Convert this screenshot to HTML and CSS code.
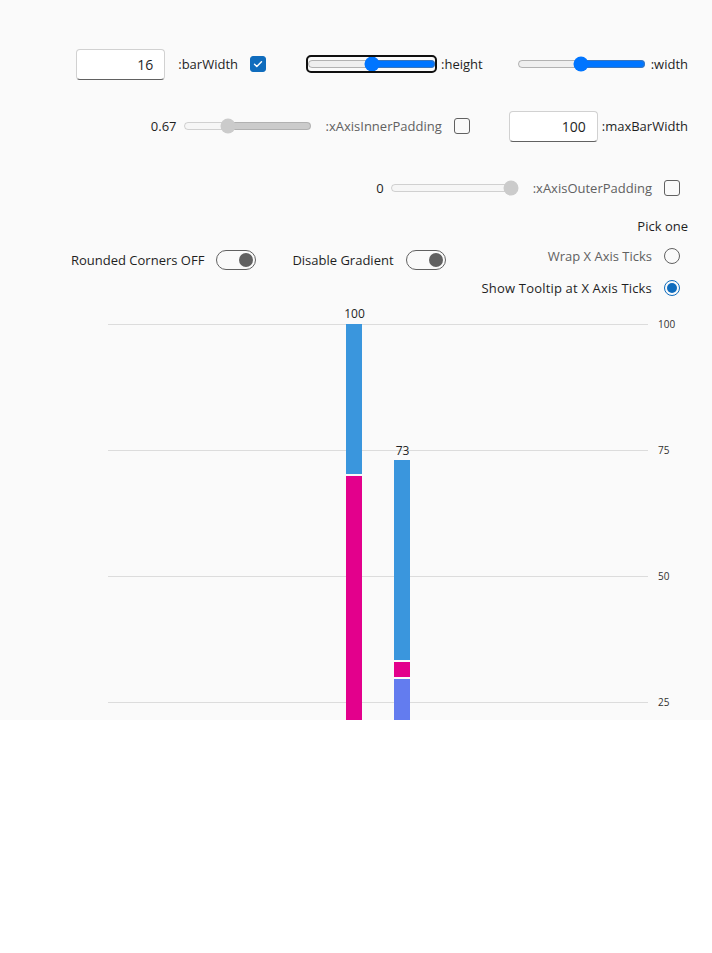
FILE: index.html
```html
<!DOCTYPE html>
<html>
<head>
<meta charset="utf-8">
<link rel="stylesheet" href="styles.css">
</head>
<body>
<div class="page">
  <div class="controls">
    <div class="row">
      <div class="num-input"><span>16</span></div>
      <span class="lbl g13">:barWidth</span>
      <span class="check checked g12"><svg width="16" height="16" viewBox="0 0 16 16"><path d="M4.5 8.2l2.3 2.3 4.7-4.8" fill="none" stroke="#fff" stroke-width="1.4" stroke-linecap="round" stroke-linejoin="round"/></svg></span>
      <input type="range" class="slider focused g41" min="0" max="100" value="50">
      <span class="lbl g5">:height</span>
      <input type="range" class="slider g34" min="0" max="100" value="50">
      <span class="lbl g5">:width</span>
    </div>
    <div class="row">
      <span class="lbl">0.67</span>
      <input type="range" class="slider g6" min="0" max="100" value="67" disabled>
      <span class="lbl dim g14">:xAxisInnerPadding</span>
      <span class="check g12"></span>
      <div class="num-input g39"><span>100</span></div>
      <span class="lbl g4">:maxBarWidth</span>
    </div>
    <div class="row">
      <span class="lbl">0</span>
      <input type="range" class="slider g6" min="0" max="100" value="0" disabled>
      <span class="lbl dim g14">:xAxisOuterPadding</span>
      <span class="check g12 mr8"></span>
    </div>
  </div>
  <div class="options">
    <div class="toggle-group">
      <span class="lbl">Rounded Corners OFF</span>
      <span class="toggle g12"><span class="knob"></span></span>
    </div>
    <div class="toggle-group">
      <span class="lbl">Disable Gradient</span>
      <span class="toggle g12"><span class="knob"></span></span>
    </div>
    <div class="radio-group">
      <div class="pick">Pick one</div>
      <div class="radio-item">
        <span class="lbl dim">Wrap X Axis Ticks</span>
        <span class="radio g12"></span>
      </div>
      <div class="radio-item">
        <span class="lbl wide">Show Tooltip at X Axis Ticks</span>
        <span class="radio on g12"><span class="dot"></span></span>
      </div>
    </div>
  </div>
  <svg class="chart" width="712" height="424" viewBox="0 0 712 424">
    <g class="grid">
      <line x1="108" y1="24.5" x2="648" y2="24.5"/>
      <line x1="108" y1="150.5" x2="648" y2="150.5"/>
      <line x1="108" y1="276.5" x2="648" y2="276.5"/>
      <line x1="108" y1="402.5" x2="648" y2="402.5"/>
    </g>
    <g class="axis">
      <text x="658" y="28">100</text>
      <text x="658" y="154">75</text>
      <text x="658" y="280">50</text>
      <text x="658" y="406">25</text>
    </g>
    <rect x="346" y="24" width="16" height="150" fill="#3a96dd"/>
    <rect x="346" y="176" width="16" height="352" fill="#e3008c"/>
    <rect x="394" y="160" width="16" height="200" fill="#3a96dd"/>
    <rect x="394" y="362" width="16" height="15" fill="#e3008c"/>
    <rect x="394" y="379" width="16" height="149" fill="#637cef"/>
    <text class="barlbl" x="354.5" y="18">100</text>
    <text class="barlbl" x="402.5" y="155">73</text>
  </svg>
</div>
</body>
</html>
```
FILE: styles.css
```css
html, body {
  margin: 0;
  padding: 0;
  background: #ffffff;
}
.page {
  width: 712px;
  height: 720px;
  overflow: hidden;
  background: #fafafa;
  font-family: "Open Sans", "Noto Sans", sans-serif;
  font-size: 13px;
  color: #1f1f1f;
}
.controls {
  display: flex;
  flex-direction: column;
  gap: 32px;
  padding: 49px 24px 0 24px;
}
.row {
  display: flex;
  justify-content: flex-end;
  align-items: center;
  height: 30px;
}
.lbl {
  white-space: nowrap;
  line-height: 20px;
}
.wide { letter-spacing: 0.18px; }
.dim { color: #616161; }
.g4 { margin-left: 4px; }
.g5 { margin-left: 5px; }
.g6 { margin-left: 6px; }
.g12 { margin-left: 12px; }
.g13 { margin-left: 13px; }
.g14 { margin-left: 14px; }
.g34 { margin-left: 34px; }
.g39 { margin-left: 39px; }
.g41 { margin-left: 41px; }
.mr8 { margin-right: 8px; }
.num-input {
  box-sizing: border-box;
  width: 89px;
  height: 31px;
  background: #fff;
  border: 1px solid #d1d1d1;
  border-bottom-color: #616161;
  border-radius: 4px;
  display: flex;
  align-items: center;
  justify-content: flex-end;
  padding-right: 11px;
  font-size: 14px;
}
.slider {
  direction: rtl;
  width: 129px;
  height: 16px;
  margin-top: 0;
  margin-bottom: 0;
  margin-right: 0;
}
.focused {
  outline: 2px solid #101010;
  outline-offset: -1px;
  border-radius: 4px;
}
.check {
  box-sizing: border-box;
  width: 16px;
  height: 16px;
  border: 1px solid #616161;
  border-radius: 3px;
  display: inline-flex;
}
.check.checked {
  background: #0f6cbd;
  border-color: #0f6cbd;
}
.check svg { margin: -1px; }
.options {
  display: flex;
  justify-content: flex-end;
  align-items: center;
  gap: 36px;
  padding: 13px 24px 0 24px;
}
.toggle-group {
  display: flex;
  align-items: center;
}
.toggle {
  box-sizing: border-box;
  width: 40px;
  height: 20px;
  border: 1px solid #616161;
  border-radius: 10px;
  display: flex;
  align-items: center;
  justify-content: flex-end;
  padding-right: 2px;
}
.knob {
  width: 14px;
  height: 14px;
  border-radius: 50%;
  background: #616161;
}
.radio-group {
  display: flex;
  flex-direction: column;
  align-items: flex-end;
}
.pick {
  line-height: 20px;
  height: 24px;
}
.radio-item {
  display: flex;
  align-items: center;
  height: 32px;
  padding-right: 8px;
}
.radio {
  box-sizing: border-box;
  width: 16px;
  height: 16px;
  border: 1px solid #616161;
  border-radius: 50%;
  display: flex;
  align-items: center;
  justify-content: center;
}
.radio.on { border-color: #0f6cbd; }
.dot {
  width: 10px;
  height: 10px;
  border-radius: 50%;
  background: #0f6cbd;
}
.chart {
  display: block;
  margin-top: -4px;
}
.grid line {
  stroke: #dcdcdc;
  stroke-width: 1;
}
.axis text {
  font-family: "Open Sans", sans-serif;
  font-size: 10px;
  fill: #323130;
}
.barlbl {
  font-family: "Open Sans", sans-serif;
  font-size: 12px;
  fill: #242424;
  text-anchor: middle;
}
```
